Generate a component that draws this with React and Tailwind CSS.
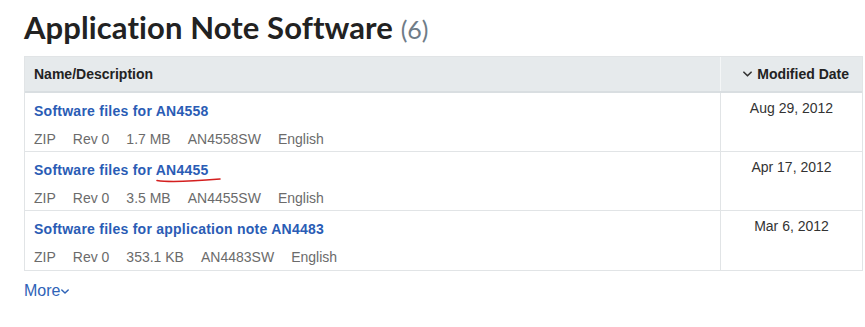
import React from 'react';

const rows = [
  { title: 'Software files for AN4558', size: '1.7 MB', code: 'AN4558SW', date: 'Aug 29, 2012' },
  { title: 'Software files for AN4455', size: '3.5 MB', code: 'AN4455SW', date: 'Apr 17, 2012', mark: true },
  { title: 'Software files for application note AN4483', size: '353.1 KB', code: 'AN4483SW', date: 'Mar 6, 2012' },
];

const Chevron = ({ className }) => (
  <svg viewBox="0 0 10 6" className={className} fill="none" stroke="currentColor" strokeWidth="1.8" strokeLinecap="round" strokeLinejoin="round">
    <path d="M1 1l4 4 4-4" />
  </svg>
);

const App = () => {
  return (
    <div className="w-[865px] h-[327px] bg-white pl-6 pt-[9px] font-['Liberation_Sans',Arial,sans-serif]">
      <h1 className="text-[31px] leading-[36px] font-bold text-[#222] font-['Lato','Liberation_Sans',sans-serif] tracking-[0.1px]">
        Application Note Software <span className="font-normal text-[#6f7c88] text-[25px] tracking-normal">(6)</span>
      </h1>

      <div className="mt-[9px] w-[839px] border border-[#e1e4e6]">
        {/* 表头 */}
        <div className="flex h-[36px] bg-[#e6eaec] border-b-2 border-[#d9dee1] text-[14px] font-bold text-[#222]">
          <div className="flex-1 flex items-center pl-[9px]">Name/Description</div>
          <div className="w-[142px] flex items-center justify-end pr-[13px] border-l border-[#f4f6f7]">
            <Chevron className="w-[9px] h-[6px] mr-[5px] text-[#333]" />
            Modified Date
          </div>
        </div>

        {rows.map((r, i) => (
          <div key={i} className={`flex h-[59px] ${i < rows.length - 1 ? 'border-b border-[#e1e4e6]' : ''}`}>
            <div className="flex-1 pl-[9px] pt-[6px]">
              <div className="relative inline-block text-[14px] leading-[18px] font-bold text-[#2a5cb5] tracking-[0.25px]">
                {r.title}
                {r.mark && (
                  <svg className="absolute left-[122px] top-[16px] w-[66px] h-[6px]" viewBox="0 0 66 6" fill="none">
                    <path d="M1 3.5 C 14 5.5, 34 4.5, 64 2" stroke="#d41f1f" strokeWidth="1.6" strokeLinecap="round" />
                  </svg>
                )}
              </div>
              <div className="mt-[7px] flex gap-[17px] text-[14px] leading-[18px] text-[#6b6b6b]">
                <span>ZIP</span>
                <span>Rev 0</span>
                <span>{r.size}</span>
                <span>{r.code}</span>
                <span>English</span>
              </div>
            </div>
            <div className="w-[142px] border-l border-[#e1e4e6] text-center pt-[6px] text-[14px] leading-[18px] text-[#333]">
              {r.date}
            </div>
          </div>
        ))}
      </div>

      <button className="mt-[8px] flex items-center text-[16px] text-[#2f63b7]">
        More
        <Chevron className="w-[8px] h-[5px] ml-[1px] mt-[1px]" />
      </button>
    </div>
  );
};

export default App;
